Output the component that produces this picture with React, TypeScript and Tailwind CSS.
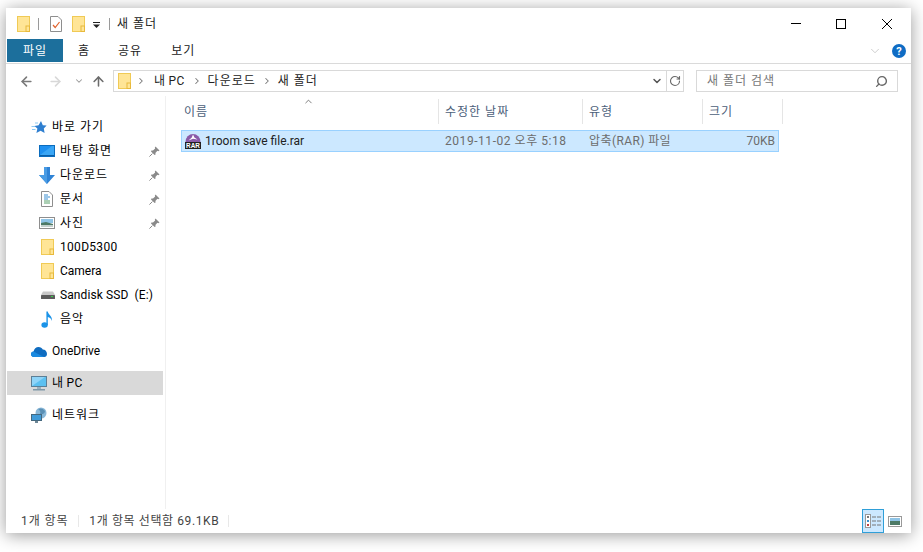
import { ArrowLeft, ArrowRight, ArrowUp, ChevronDown, ChevronRight, ChevronUp, RotateCw, Search } from "lucide-react";
import type { ReactNode } from "react";

const Folder = ({ className = "" }: { className?: string }) => (
    <svg width="13" height="16" viewBox="0 0 13 16" className={className}>
        <rect x="0.5" y="0.5" width="12" height="15" fill="#ffe596" stroke="#f0ca55" />
        <rect x="9" y="10" width="3.5" height="5.5" fill="#ffe596" stroke="#e8b93c" />
    </svg>
);

const Pin = () => (
    <svg width="11" height="11" viewBox="0 0 11 11">
        <path d="M6.5 0.5 L10.5 4.5 L9.2 5.2 L8.4 4.8 L6.4 7 L6.6 8.6 L5.6 9 L2 5.4 L2.4 4.4 L4 4.6 L6.2 2.6 L5.8 1.8 Z" fill="#8a8a8a" />
        <path d="M3.4 7.6 L0.4 10.6" stroke="#8a8a8a" strokeWidth="1" />
    </svg>
);

const Star = () => (
    <svg width="16" height="15" viewBox="0 0 16 15">
        <path d="M10 1 L11.8 5.2 L15.6 5.6 L12.8 8.4 L13.6 13 L9.6 10.8 L5.4 13 L6.4 8.6 L3.4 6 L7.6 5.2 Z" fill="#2f7fd0" />
        <path d="M0.5 6.5 H4 M1 9.5 H4.5 M4 3 H7" stroke="#8ec8f0" strokeWidth="1" />
    </svg>
);

const Desktop = () => (
    <svg width="16" height="12" viewBox="0 0 16 12">
        <rect x="0.5" y="0.5" width="15" height="11" fill="#1e90f0" stroke="#0b6cbd" />
        <path d="M1 10 L13 1 H15 V10 Z" fill="#3aa6f5" />
        <rect x="1" y="10" width="14" height="1" fill="#0a5fa8" />
    </svg>
);

const Download = () => (
    <svg width="16" height="17" viewBox="0 0 16 17">
        <path d="M5 0 H11 V8 H16 L8 17 L0 8 H5 Z" fill="#2f83d6" />
        <path d="M5 0 H8 V17 L0 8 H5 Z" fill="#4a9ce4" />
    </svg>
);

const Doc = () => (
    <svg width="12" height="16" viewBox="0 0 12 16">
        <path d="M0.5 0.5 H8 L11.5 4 V15.5 H0.5 Z" fill="#fff" stroke="#8e8e8e" />
        <path d="M3 4 H7 M3 6 H9 M3 8 H7" stroke="#3a8ed0" strokeWidth="1" />
        <path d="M3 10 H9 M3 12 H9" stroke="#58a06a" strokeWidth="1" />
    </svg>
);

const Photo = () => (
    <svg width="16" height="12" viewBox="0 0 16 12">
        <rect x="0.5" y="0.5" width="15" height="11" fill="#fff" stroke="#8e8e8e" />
        <rect x="2" y="2" width="12" height="4" fill="#8fc4e6" />
        <path d="M2 6 L7 5 L14 7 V10 H2 Z" fill="#4d7a66" />
        <rect x="2" y="8" width="12" height="2" fill="#c4d0cc" />
    </svg>
);

const Drive = () => (
    <svg width="14" height="8" viewBox="0 0 14 8">
        <path d="M2 0.5 H12 L14 4 H0 Z" fill="#c9c9c9" />
        <rect x="0" y="4" width="14" height="4" rx="0.5" fill="#5c5c5c" />
        <rect x="10" y="5" width="2" height="1" fill="#38d04a" />
    </svg>
);

const Note = () => (
    <svg width="12" height="17" viewBox="0 0 12 17">
        <ellipse cx="3.6" cy="14" rx="3.2" ry="2.8" fill="#1b93e8" />
        <path d="M5.4 14 V0.5 H6.8 C7 3.5 11.5 5 11 10 C10.4 7.6 8.6 6.6 6.8 6 V14 Z" fill="#1b93e8" />
    </svg>
);

const Cloud = () => (
    <svg width="16" height="11" viewBox="0 0 16 11">
        <path d="M3 11 C0.8 11 0 9.4 0 8.2 C0 6.6 1.2 5.6 2.6 5.6 C3 3 5 1 7.6 1 C9.6 1 11 2 11.8 3.6 C14.2 3.6 16 5.6 16 8 C16 9.8 14.8 11 13.4 11 Z" fill="#0f6cc0" />
        <path d="M3 11 C0.8 11 0 9.4 0 8.2 C0 6.6 1.2 5.6 2.6 5.6 L9 9 L13.4 11 Z" fill="#1a8ae0" />
    </svg>
);

const Monitor = () => (
    <svg width="16" height="15" viewBox="0 0 16 15">
        <rect x="0.5" y="0.5" width="15" height="10" fill="#8fd4f8" stroke="#5c7f96" />
        <path d="M1 10 L14 1 H15 V10 Z" fill="#5cc0f0" />
        <rect x="6" y="11" width="4" height="2" fill="#9ab0be" />
        <rect x="2" y="13" width="12" height="1.5" fill="#7e98a8" />
    </svg>
);

const Network = () => (
    <svg width="16" height="16" viewBox="0 0 16 16">
        <circle cx="10" cy="6" r="5.5" fill="#8ab8d8" />
        <path d="M7 2 C9 3 10 5 9 7 C12 8 14 6 14 4 C12 1 9 1 7 2 Z" fill="#5a8fb4" />
        <rect x="0.5" y="7.5" width="10" height="6" fill="#3f9ad8" stroke="#44687e" />
        <rect x="4" y="14" width="3" height="2" fill="#6e8796" />
    </svg>
);

const Rar = () => (
    <svg width="16" height="16" viewBox="0 0 16 16">
        <path d="M0.5 9 A7.5 8 0 0 1 15.5 9 Z" fill="#8a5aa8" />
        <path d="M8 1.5 L9.4 4.5 L12.5 6.5 L8 5.8 L3.5 7.5 L6.8 4.5 Z" fill="#fff" />
        <rect x="0" y="9" width="16" height="7" fill="#202020" />
        <text x="8" y="15" textAnchor="middle" fontSize="6.4" fontWeight="700" fill="#fff" fontFamily="Liberation Sans, sans-serif">
            RAR
        </text>
    </svg>
);

const NavRow = ({ icon, label, pin, indent, active, narrow, track = "", className = "" }: { icon: ReactNode; label: string; pin?: boolean; indent?: boolean; active?: boolean; narrow?: boolean; track?: string; className?: string }) => (
    <div className={`h-[24px] w-[156px] flex items-center ${active ? "bg-[#d9d9d9]" : ""} ${className}`}>
        {/* icon slot */}
        <div className={`${indent ? (narrow ? "w-[53px] pl-[34px]" : "w-[53px] pl-[32px]") : "w-[45px] pl-[24px]"} flex items-center shrink-0`}>{icon}</div>
        <span className={`flex-1 whitespace-pre text-black ${track}`}>{label}</span>
        {pin && (
            <div className="pr-[3px]">
                <Pin />
            </div>
        )}
    </div>
);

const Header = ({ label, width }: { label: string; width: string }) => (
    <div className={`${width} h-[25px] flex items-center pl-[6px] border-r border-[#e5e5e5] text-[#4c607a] tracking-[1px]`}>{label}</div>
);

const App = () => {
    return (
        <div className="w-[923px] h-[552px] bg-white pt-[8px] pl-[6px] overflow-hidden font-['Roboto','Noto_Sans_CJK_KR',sans-serif] text-[12px] leading-none">
            <div className="w-[905px] h-[525px] bg-white flex flex-col shadow-[0_2px_16px_rgba(0,0,0,0.4)]">
                {/* title bar */}
                <div className="h-[31px] flex items-center shrink-0">
                    <Folder className="ml-[11px]" />
                    <div className="w-px h-[12px] bg-[#9a9a9a] ml-[8px]" />
                    <svg width="12" height="16" viewBox="0 0 12 16" className="ml-[11px]">
                        <path d="M0.5 0.5 H8 L11.5 4 V15.5 H0.5 Z" fill="#fff" stroke="#8e8e8e" />
                        <path d="M3 9 L5.2 11.5 L9.5 6" fill="none" stroke="#e0622c" strokeWidth="1.2" />
                    </svg>
                    <Folder className="ml-[10px]" />
                    <svg width="7" height="6" viewBox="0 0 7 6" className="ml-[8px] mt-[3px]">
                        <rect width="7" height="1" fill="#222" />
                        <path d="M0 2.5 H7 L3.5 6 Z" fill="#222" />
                    </svg>
                    <div className="w-px h-[12px] bg-[#9a9a9a] ml-[9px]" />
                    <span className="ml-[7px] text-[#222] tracking-[1px]">새 폴더</span>
                    <div className="ml-auto flex items-center">
                        <div className="w-[10px] h-px bg-black mr-[35px]" />
                        <div className="w-[10px] h-[10px] border border-black mr-[36px]" />
                        <svg width="10" height="10" viewBox="0 0 10 10" className="mr-[19px]">
                            <path d="M0 0 L10 10 M10 0 L0 10" stroke="#000" strokeWidth="1" />
                        </svg>
                    </div>
                </div>

                {/* ribbon tabs */}
                <div className="h-[25px] flex items-start shrink-0 border-b border-[#dadada] text-[#222] tracking-[1px]">
                    <div className="ml-px w-[56px] h-[23px] bg-[#1c6f9c] text-white flex items-center justify-center">파일</div>
                    <div className="ml-[15px] h-[23px] flex items-center">홈</div>
                    <div className="ml-[28px] h-[23px] flex items-center">공유</div>
                    <div className="ml-[29px] h-[23px] flex items-center">보기</div>
                    <ChevronDown size={14} strokeWidth={1} className="ml-auto mt-[5px] text-[#aaa]" />
                    <div className="ml-[10px] mr-[5px] mt-[5px] w-[14px] h-[14px] rounded-full bg-[#0f6cc4] text-white text-[11px] font-bold flex items-center justify-center tracking-normal">?</div>
                </div>

                {/* address row */}
                <div className="h-[32px] flex items-center shrink-0 pt-[2px]">
                    <ArrowLeft size={15} strokeWidth={2.5} className="ml-[13px] text-[#7a7a7a]" />
                    <ArrowRight size={15} strokeWidth={2.5} className="ml-[14px] text-[#d8d8d8]" />
                    <ChevronDown size={10} strokeWidth={2.5} className="ml-[11px] text-[#999]" />
                    <ArrowUp size={15} strokeWidth={2.5} className="ml-[7px] text-[#6d6d6d]" />
                    <div className="ml-[7px] w-[571px] h-[22px] border border-[#d9d9d9] flex items-center text-[#222]">
                        <Folder className="ml-[4px] shrink-0" />
                        <ChevronRight size={10} strokeWidth={2.5} className="ml-[5px] text-[#777]" />
                        <span className="ml-[8px] tracking-[0.3px]">내 PC</span>
                        <ChevronRight size={10} strokeWidth={2.5} className="ml-[7px] text-[#777]" />
                        <span className="ml-[6px] tracking-[1px]">다운로드</span>
                        <ChevronRight size={10} strokeWidth={2.5} className="ml-[6px] text-[#777]" />
                        <span className="ml-[6px] tracking-[1px]">새 폴더</span>
                        <ChevronDown size={12} strokeWidth={3} className="ml-auto mr-[3px] text-[#555]" />
                        <div className="w-[17px] h-full border-l border-[#d9d9d9] flex items-center justify-center">
                            <RotateCw size={12} strokeWidth={2.2} className="text-[#666]" />
                        </div>
                    </div>
                    <div className="ml-[12px] w-[202px] h-[22px] border border-[#d9d9d9] flex items-center pl-[10px] pr-[9px] text-[#777]">
                        <span className="tracking-[1px]">새 폴더 검색</span>
                        <Search size={13} strokeWidth={2.6} className="ml-auto text-[#666] -scale-x-100" />
                    </div>
                </div>

                {/* body */}
                <div className="flex-1 flex min-h-0">
                    <div className="w-[160px] shrink-0 border-r border-[#f0f0f0] pt-[19px] pl-px">
                        <NavRow icon={<Star />} label="바로 가기" track="tracking-[1px]" />
                        <NavRow icon={<Desktop />} label="바탕 화면" pin indent track="tracking-[1px]" />
                        <NavRow icon={<Download />} label="다운로드" pin indent track="tracking-[1px]" />
                        <NavRow icon={<Doc />} label="문서" pin indent narrow track="tracking-[1px]" />
                        <NavRow icon={<Photo />} label="사진" pin indent track="tracking-[1px]" />
                        <NavRow icon={<Folder />} label="100D5300" indent narrow track="tracking-[0.3px]" />
                        <NavRow icon={<Folder />} label="Camera" indent narrow />
                        <NavRow icon={<Drive />} label="Sandisk SSD  (E:)" indent narrow track="tracking-[0.1px]" />
                        <NavRow icon={<Note />} label="음악" indent narrow track="tracking-[1px]" />
                        <NavRow icon={<Cloud />} label="OneDrive" className="mt-[8px]" />
                        <NavRow icon={<Monitor />} label="내 PC" active className="mt-[8px]" track="tracking-[0.3px]" />
                        <NavRow icon={<Network />} label="네트워크" track="tracking-[1px]" className="mt-[8px]" />
                    </div>

                    <div className="flex-1 pl-[15px] min-w-0">
                        <div className="flex mt-[3px] -ml-[3px] relative">
                            <Header label="이름" width="w-[261px]" />
                            <ChevronUp size={11} strokeWidth={1.5} className="absolute left-[125px] -top-[3px] text-[#444]" />
                            <Header label="수정한 날짜" width="w-[144px]" />
                            <Header label="유형" width="w-[120px]" />
                            <Header label="크기" width="w-[80px]" />
                        </div>
                        <div className="mt-[6px] w-[598px] h-[22px] bg-[#cce8ff] border border-[#99d1ff] flex items-center">
                            <div className="ml-[3px] shrink-0">
                                <Rar />
                            </div>
                            <span className="ml-[4px] w-[240px] text-[#222]">1room save file.rar</span>
                            <span className="w-[144px] text-[#6d6d6d] tracking-[0.55px]">2019-11-02 오후 5:18</span>
                            <span className="text-[#6d6d6d] tracking-[0.4px]">압축(RAR) 파일</span>
                            <span className="ml-auto mr-[3px] text-[#6d6d6d]">70KB</span>
                        </div>
                    </div>
                </div>

                {/* status bar */}
                <div className="h-[24px] flex items-center shrink-0 text-[#444]">
                    <span className="ml-[15px] tracking-[0.9px]">1개 항목</span>
                    <div className="ml-[10px] w-px h-[12px] bg-[#e8e8e8]" />
                    <span className="ml-[10px] tracking-[0.6px]">1개 항목 선택함 69.1KB</span>
                    <div className="ml-[9px] w-px h-[12px] bg-[#e8e8e8]" />
                    <div className="ml-auto w-[22px] h-[24px] bg-[#cce8ff] border border-[#2f9fd8] flex items-center justify-center">
                        <svg width="16" height="14" viewBox="0 0 16 14">
                            <rect x="0.5" y="0.5" width="5" height="13" fill="#fff" stroke="#999" />
                            <rect x="2" y="2" width="2" height="2" fill="#777" />
                            <rect x="2" y="6" width="2" height="2" fill="#3a8ed0" />
                            <rect x="2" y="10" width="2" height="2" fill="#c04040" />
                            <path d="M7 3 H11 M12 3 H16 M7 7 H11 M12 7 H16 M7 11 H11 M12 11 H16" stroke="#777" strokeWidth="1" />
                        </svg>
                    </div>
                    <div className="ml-[4px] mr-[9px]">
                        <svg width="14" height="11" viewBox="0 0 14 11">
                            <rect x="0.5" y="0.5" width="13" height="10" fill="#fff" stroke="#999" />
                            <rect x="2" y="2" width="10" height="3" fill="#8fc4e6" />
                            <rect x="2" y="5" width="10" height="4" fill="#4d7a66" />
                        </svg>
                    </div>
                </div>
            </div>
        </div>
    );
};

export default App;
